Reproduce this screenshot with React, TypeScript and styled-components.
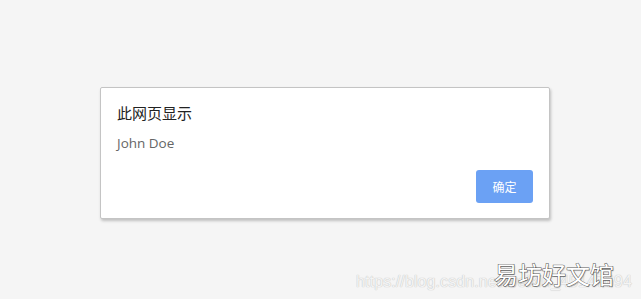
import styled, { createGlobalStyle } from 'styled-components'

const GlobalStyle = createGlobalStyle`
  html, body {
    margin: 0;
    padding: 0;
    background: #f5f5f5;
    font-family: "Open Sans", "Noto Sans CJK SC", sans-serif;
  }
`

const Page = styled.div`
  position: relative;
  width: 641px;
  height: 299px;
  overflow: hidden;
  background: #f5f5f5;
  padding: 87px 0 0 100px;
  box-sizing: border-box;
`

const Dialog = styled.div`
  box-sizing: border-box;
  width: 450px;
  height: 132px;
  background: #fff;
  border: 1px solid #c4c4c4;
  border-radius: 2px;
  box-shadow: 1px 2px 3px rgba(0, 0, 0, 0.22);
  padding: 14px 16px 15px 16px;
  display: flex;
  flex-direction: column;
`

const Title = styled.div`
  font-family: "Noto Sans CJK SC", sans-serif;
  font-size: 15px;
  line-height: 22px;
  color: #222;
`

const Message = styled.div`
  margin-top: 9px;
  font-family: "Open Sans", "Noto Sans CJK SC", sans-serif;
  font-size: 13.5px;
  line-height: 20px;
  color: #666;
`

const Footer = styled.div`
  margin-top: auto;
  display: flex;
  justify-content: flex-end;
`

const OkButton = styled.button`
  width: 57px;
  height: 33px;
  border: none;
  border-radius: 3px;
  background: #6ba1f4;
  color: #fff;
  font-family: "Noto Sans CJK SC", sans-serif;
  font-size: 12px;
  padding: 0;
  cursor: pointer;
`

const Watermark = styled.div`
  position: absolute;
  right: 9px;
  bottom: 7px;
  display: flex;
  flex-direction: column;
  align-items: flex-end;
  pointer-events: none;
`

const Brand = styled.span`
  font-family: "Noto Sans CJK SC", sans-serif;
  font-size: 24px;
  line-height: 26px;
  color: #fff;
  -webkit-text-stroke: 1px #5a5a5a;
  paint-order: stroke fill;
  text-shadow: 1px 1px 1px rgba(0, 0, 0, 0.25);
  margin-right: 18px;
  margin-bottom: -15px;
  position: relative;
  z-index: 1;
`

const Url = styled.span`
  font-family: "Liberation Sans", sans-serif;
  font-size: 16px;
  line-height: 20px;
  letter-spacing: 0.1px;
  color: #f4f4f4;
  text-shadow: 0 0 1px #c4c4c4, 0 0 1px #cccccc;
`

export default function App() {
  return (
    <>
      <GlobalStyle />
      <Page>
        <Dialog>
          <Title>此网页显示</Title>
          <Message>John Doe</Message>
          <Footer>
            <OkButton>确定</OkButton>
          </Footer>
        </Dialog>
        <Watermark>
          <Brand>易坊好文馆</Brand>
          <Url>https://blog.csdn.net/weixin_45147694</Url>
        </Watermark>
      </Page>
    </>
  )
}
